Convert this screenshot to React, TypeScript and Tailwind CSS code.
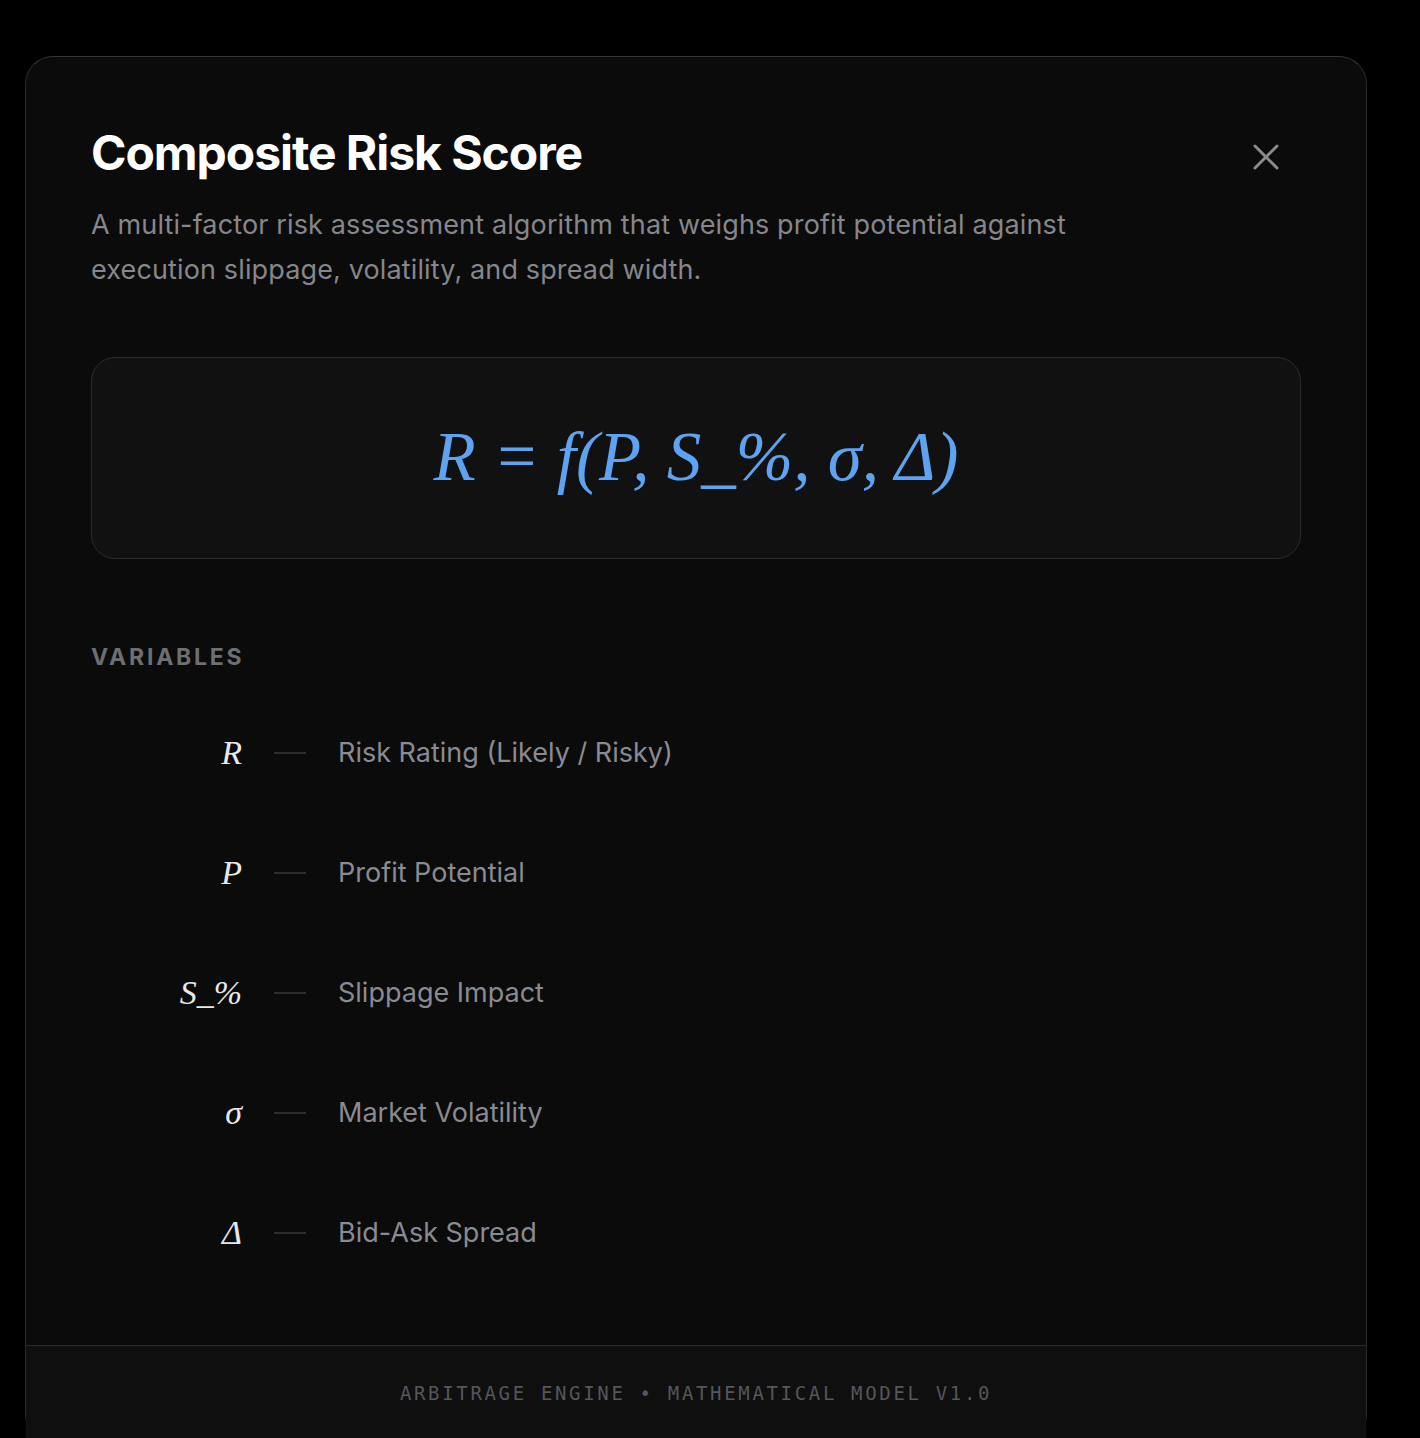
import React from 'react';
import { X } from 'lucide-react';

const VARIABLES = [
  { symbol: 'R', label: 'Risk Rating (Likely / Risky)' },
  { symbol: 'P', label: 'Profit Potential' },
  { symbol: 'S_%', label: 'Slippage Impact' },
  { symbol: 'σ', label: 'Market Volatility' },
  { symbol: 'Δ', label: 'Bid-Ask Spread' },
];

const serif = { fontFamily: '"Liberation Serif", "DejaVu Serif", serif' };

export default function App() {
  return (
    <div className="h-[1438px] w-full overflow-hidden bg-black font-['Inter',sans-serif]">
      <div className="ml-[25px] mt-[56px] w-[1342px] rounded-[28px] border border-[#2a2a2a] border-t-[#353535] bg-[#0b0b0b]">
        <div className="px-[65px] pt-[65px] pb-[92px]">
          <div className="flex items-start justify-between">
            <h2 className="text-[48px] font-bold leading-[62px] tracking-[-0.022em] text-white">
              Composite Risk Score
            </h2>
            <button className="mr-[13px] mt-[13px] text-[#8a8a8f]">
              <X size={44} strokeWidth={1.6} />
            </button>
          </div>
          <p className="mt-[18px] max-w-[1010px] text-[27px] leading-[45px] tracking-[0.005em] text-[#86868c]">
            A multi-factor risk assessment algorithm that weighs profit potential against execution
            slippage, volatility, and spread width.
          </p>

          <div className="mt-[65px] flex h-[202px] items-center justify-center rounded-[24px] border border-[#2b2b2b] bg-[#111111]">
            <span className="text-[69px] italic text-[#5ea3f2]" style={serif}>
              R = f(P, S_%, σ, Δ)
            </span>
          </div>

          <h3 className="mt-[84px] text-[23px] font-bold uppercase leading-[28px] tracking-[0.12em] text-[#6e6e75]">
            Variables
          </h3>

          <div className="mt-[62px] flex flex-col gap-[80px]">
            {VARIABLES.map((v) => (
              <div key={v.symbol} className="flex h-[40px] items-center gap-[32px]">
                <span
                  className="w-[151px] text-right text-[34px] italic leading-[40px] text-[#e8e8ea]"
                  style={serif}
                >
                  {v.symbol}
                </span>
                <span className="h-[2px] w-[32px] bg-[#2c2c2c]" />
                <span className="text-[27px] leading-[40px] text-[#8a8a92]">{v.label}</span>
              </div>
            ))}
          </div>
        </div>

        <div className="border-t border-[#2a2a2a] bg-[#0f0f0f] pt-[35px] pb-[36px] text-center">
          <span className="font-['DejaVu_Sans_Mono',monospace] text-[19px] uppercase leading-[24px] tracking-[0.14em] text-[#56565c]">
            Arbitrage Engine • Mathematical Model v1.0
          </span>
        </div>
      </div>
    </div>
  );
}
